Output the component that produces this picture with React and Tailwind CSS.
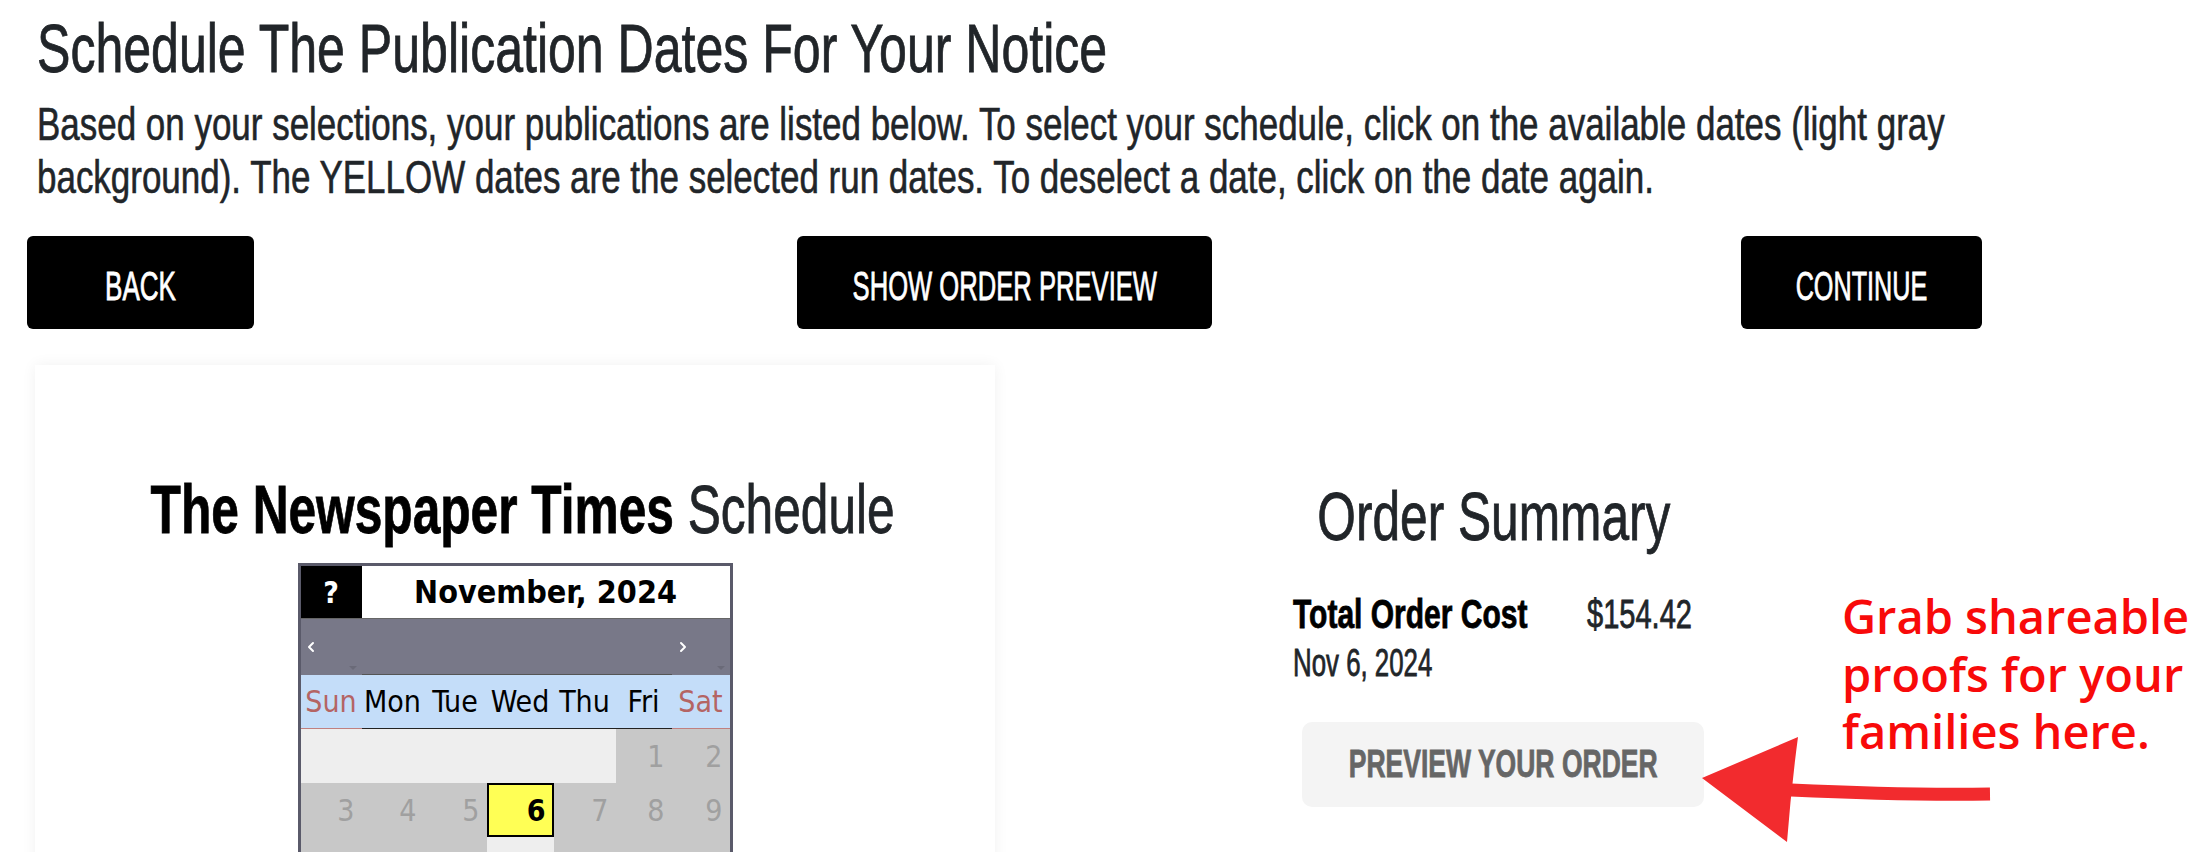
import { ChevronLeft, ChevronRight } from "lucide-react";

// condensed display face stand-in: Arial-metric sans squeezed horizontally
const display = "font-['Liberation_Sans',Arial,sans-serif]";
const calFont = "font-['DejaVu_Sans',sans-serif] font-stretch-condensed";
const heavy = "[-webkit-text-stroke:0.8px_currentColor]";

const days = ["Sun", "Mon", "Tue", "Wed", "Thu", "Fri", "Sat"];
const weeks = [
  [null, null, null, null, null, 1, 2],
  [3, 4, 5, 6, 7, 8, 9],
  [10, 11, 12, 13, 14, 15, 16],
  [17, 18, 19, 20, 21, 22, 23],
  [24, 25, 26, 27, 28, 29, 30],
];
const selected = [6];
const available = [13, 20, 27];
const cols = "grid grid-cols-[61px_62px_63px_67px_62px_56px_58px]";

function DayCell({ day }) {
  if (day === null) return <div className="h-[54px] bg-[#eeeeee]" />;
  if (selected.includes(day)) {
    return (
      <div className="h-[54px] bg-[#ffff55] border-2 border-black flex items-center justify-end pr-[6px] font-bold text-black">
        {day}
      </div>
    );
  }
  if (available.includes(day)) {
    return (
      <div className="h-[54px] bg-[#eeeeee] flex items-center justify-end pr-[8px] font-bold text-[#222]">
        {day}
      </div>
    );
  }
  return (
    <div className="h-[54px] bg-[#c8c8c8] flex items-center justify-end pr-[7px] text-[#a0a0a0]">
      {day}
    </div>
  );
}

function Calendar() {
  return (
    <div className={`w-[435px] border-[3px] border-[#5a5a6a] bg-white ${calFont}`}>
      <div className={`${cols} h-[53px] border-b border-[#666]`}>
        <div className="bg-black text-white font-bold text-[30px] flex items-center justify-center">?</div>
        <div className="col-span-6 flex items-center justify-center font-bold text-[32px] text-black">
          November, 2024
        </div>
      </div>
      <div className={`${cols} h-[56px] bg-[#787888]`}>
        <div className="relative flex items-center pl-[2px] text-white">
          <ChevronLeft size={16} strokeWidth={3} />
          <span className="absolute right-[5px] bottom-[5px] border-x-[4px] border-t-[4px] border-x-transparent border-t-[#6a6a78]" />
        </div>
        <div className="col-span-5 border-b border-[#555]" />
        <div className="relative flex items-center pl-[3px] text-white">
          <ChevronRight size={16} strokeWidth={3} />
          <span className="absolute right-[5px] bottom-[5px] border-x-[4px] border-t-[4px] border-x-transparent border-t-[#6a6a78]" />
        </div>
      </div>
      <div className={`${cols} h-[54px] bg-[#c4ddf9] text-[30px]`}>
        {days.map((d, i) => (
          <div
            key={d}
            className={
              i === 0 || i === 6
                ? "flex items-center justify-center whitespace-nowrap text-[#b46464] border-b border-[#c08080]"
                : "flex items-center justify-center whitespace-nowrap text-black border-b border-[#222]"
            }
          >
            {d}
          </div>
        ))}
      </div>
      <div className={`${cols} text-[30px]`}>
        {weeks.map((w, wi) => w.map((d, di) => <DayCell key={`${wi}-${di}`} day={d} />))}
      </div>
    </div>
  );
}

export default function App() {
  return (
    <div className="h-[852px] overflow-hidden bg-white">
      <div className={`relative ml-[27px] w-[1955px] ${display}`}>
        <h1 className={`pt-[8px] pl-[10px] text-[68px] leading-[80px] text-[#212529] whitespace-nowrap ${heavy}`}>
          <span className="inline-block origin-left scale-x-[0.736]">Schedule The Publication Dates For Your Notice</span>
        </h1>
        <div className="pl-[10px] mt-[10px] text-[46px] leading-[53px] text-[#212529] whitespace-nowrap [-webkit-text-stroke:0.6px_currentColor]">
          <p className="origin-left scale-x-[0.76]">
            Based on your selections, your publications are listed below. To select your schedule, click on the available dates (light gray
          </p>
          <p className="origin-left scale-x-[0.76]">
            background). The YELLOW dates are the selected run dates. To deselect a date, click on the date again.
          </p>
        </div>

        <div className={`mt-[32px] grid grid-cols-3 text-[40px] text-white ${heavy}`}>
          <button className="justify-self-start w-[227px] h-[93px] pt-[6px] bg-black rounded-[6px] flex items-center justify-center">
            <span className="inline-block whitespace-nowrap scale-x-[0.65]">BACK</span>
          </button>
          <button className="justify-self-center w-[415px] h-[93px] pt-[6px] bg-black rounded-[6px] flex items-center justify-center">
            <span className="inline-block whitespace-nowrap scale-x-[0.64]">SHOW ORDER PREVIEW</span>
          </button>
          <button className="justify-self-end w-[241px] h-[93px] pt-[6px] bg-black rounded-[6px] flex items-center justify-center">
            <span className="inline-block whitespace-nowrap scale-x-[0.63]">CONTINUE</span>
          </button>
        </div>

        <div className="mt-[36px] flex items-start">
          <div className="ml-[8px] w-[960px] bg-white pt-[104px] pb-[60px] shadow-[0_0_14px_rgba(0,0,0,0.06)] flex flex-col items-center">
            <h2 className={`ml-[16px] text-[68px] leading-[80px] whitespace-nowrap ${heavy}`}>
              <span className="inline-block scale-x-[0.73]">
                <span className="font-bold text-black">The Newspaper Times</span>{" "}
                <span className="text-[#212529]">Schedule</span>
              </span>
            </h2>
            <div className="mt-[14px]">
              <Calendar />
            </div>
          </div>

          <div className="flex-1 pl-[10px] pt-[111px] flex flex-col items-center">
            <h2 className={`text-[68px] leading-[80px] text-[#212529] whitespace-nowrap ${heavy}`}>
              <span className="inline-block scale-x-[0.73]">Order Summary</span>
            </h2>
            <div className={`ml-[10px] w-[411px] mt-[36px] ${heavy}`}>
              <div className="flex">
                <div className="w-[294px] text-[40px] leading-[44px] font-bold text-black whitespace-nowrap">
                  <span className="inline-block origin-left scale-x-[0.75]">Total Order Cost</span>
                </div>
                <div className="text-[40px] leading-[44px] text-[#212529] whitespace-nowrap">
                  <span className="inline-block origin-left scale-x-[0.726]">$154.42</span>
                </div>
              </div>
              <div className="mt-[5px] text-[38px] leading-[44px] text-[#212529] whitespace-nowrap">
                <span className="inline-block origin-left scale-x-[0.68]">Nov 6, 2024</span>
              </div>
              <button className="mt-[37px] ml-[9px] w-[402px] h-[85px] bg-[#f4f4f4] rounded-[10px] text-[39px] font-bold text-[#666] flex items-center justify-center">
                <span className="inline-block whitespace-nowrap scale-x-[0.68]">PREVIEW YOUR ORDER</span>
              </button>
            </div>
          </div>
        </div>

        <div className="absolute left-[1815px] top-[588px] whitespace-nowrap font-['Open_Sans',sans-serif] font-semibold text-[47px] leading-[57.5px] text-[#f80a0a]">
          Grab shareable
          <br />
          proofs for your
          <br />
          families here.
        </div>

        <svg className="absolute left-[1668px] top-[730px]" width="305" height="125" viewBox="0 0 305 125">
          <path d="M96 60 C160 63 230 65 295 64" fill="none" stroke="#f22b2e" strokeWidth="13" />
          <path d="M7 48 L103 7 Q96 60 92 112 Z" fill="#f22b2e" />
        </svg>
      </div>
    </div>
  );
}
